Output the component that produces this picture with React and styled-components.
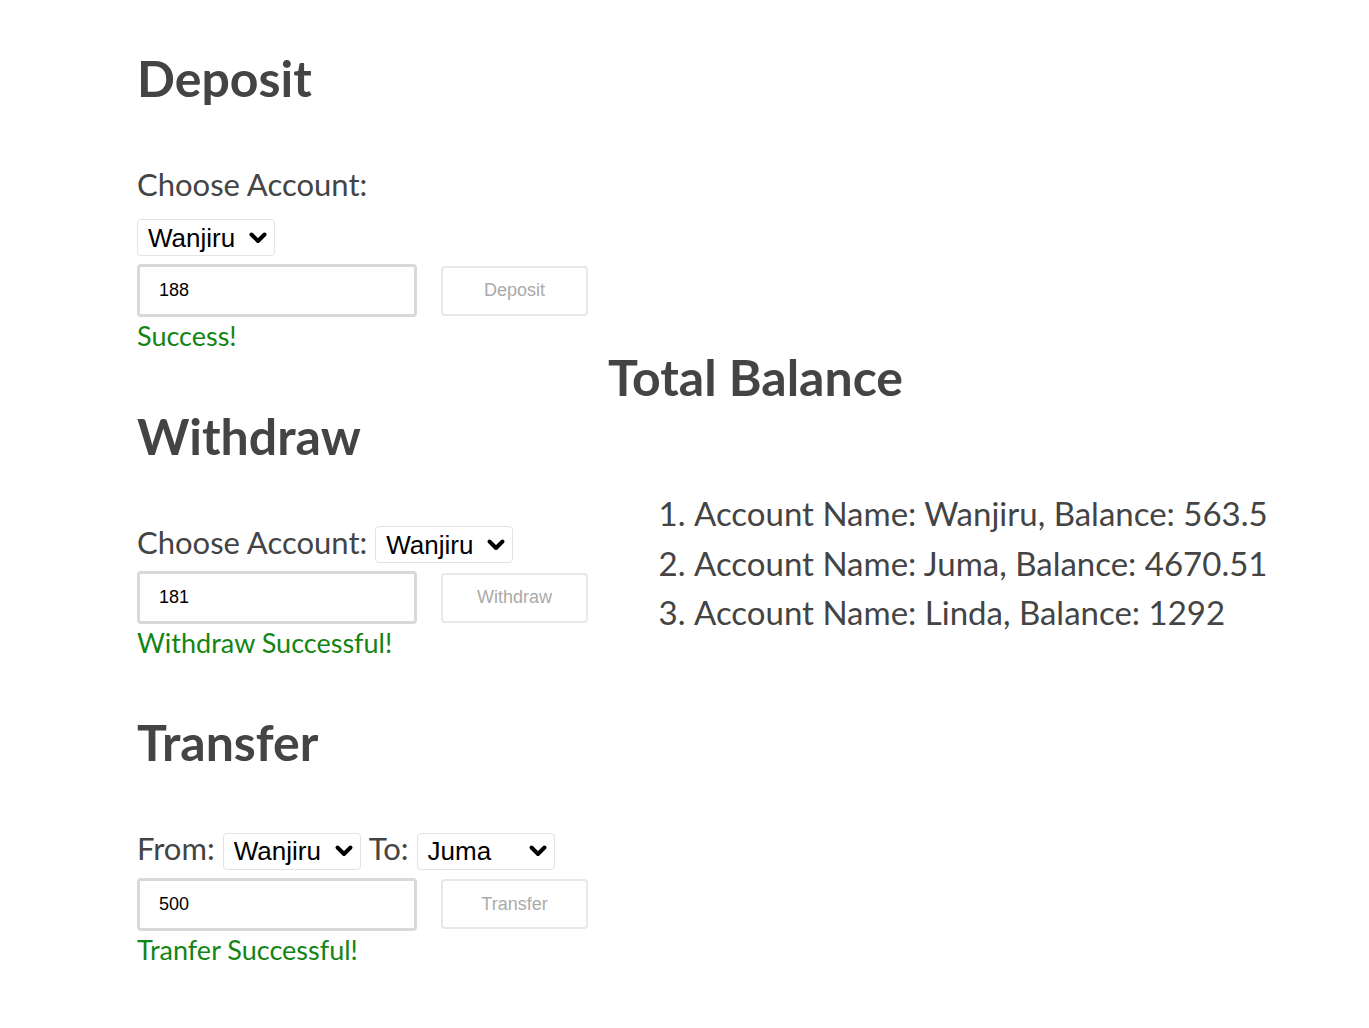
import React, { useState } from "react";
import styled, { createGlobalStyle } from "styled-components";

const GlobalStyle = createGlobalStyle`
  body {
    margin: 0;
    background: #fff;
    font-family: Lato, "Open Sans", sans-serif;
  }
`;

const Page = styled.div`
  display: flex;
  align-items: flex-start;
  gap: 20px;
  padding: 48px 0 40px 137px;
`;

const Column = styled.div`
  width: 451px;
  display: flex;
  flex-direction: column;
  align-items: flex-start;
`;

const Section = styled.section`
  display: flex;
  flex-direction: column;
  align-items: flex-start;
  margin-bottom: 53px;

  &:last-child {
    margin-bottom: 0;
  }
`;

const Heading = styled.h2`
  margin: 0 0 ${(p) => (p.$flush ? 0 : 58)}px;
  font-size: 50px;
  line-height: 1.2;
  font-weight: 700;
  color: #444;
`;

const Label = styled.span`
  font-size: 31px;
  line-height: 1.2;
  color: #444;
`;

const StackLabel = styled(Label)`
  display: block;
  margin-bottom: 16px;
`;

const SelectRow = styled.div`
  display: flex;
  align-items: baseline;
  gap: 8px;
`;

const SelectWrap = styled.span`
  position: relative;
  display: inline-flex;
`;

const Select = styled.select`
  appearance: none;
  -webkit-appearance: none;
  box-sizing: border-box;
  height: 37px;
  padding: 0 38px 0 10px;
  border: 1px solid #e2e2e2;
  border-radius: 4px;
  background: #fff;
  color: #000;
  font-family: "Liberation Sans", Arial, sans-serif;
  font-size: 26px;
  outline: none;
`;

const Chevron = styled.svg`
  position: absolute;
  right: 7px;
  top: 50%;
  transform: translateY(-50%);
  pointer-events: none;
`;

const FormRow = styled.div`
  display: flex;
  align-items: center;
  gap: 24px;
  margin-top: 8px;
`;

const AmountInput = styled.input`
  box-sizing: border-box;
  width: 280px;
  height: 53px;
  padding: 0 19px;
  border: 3px solid #d9d9d9;
  border-radius: 4px;
  font-family: "Liberation Sans", Arial, sans-serif;
  font-size: 18px;
  color: #000;
  outline: none;
`;

const ActionButton = styled.button`
  box-sizing: border-box;
  width: 147px;
  height: 50px;
  border: 2px solid #e8e8e8;
  border-radius: 4px;
  background: #fff;
  color: #aaa;
  font-family: "Liberation Sans", Arial, sans-serif;
  font-size: 18px;
`;

const Message = styled.p`
  margin: 3px 0 0;
  font-size: 27px;
  line-height: 1.2;
  color: #148514;
`;

const BalancePanel = styled.div`
  margin-top: 299px;
`;

const BalanceList = styled.ol`
  margin: 82px 0 0;
  padding-left: 86px;
  font-size: 33px;
  line-height: 1.5;
  color: #444;
`;

const accounts = [
  { name: "Wanjiru", balance: 563.5 },
  { name: "Juma", balance: 4670.51 },
  { name: "Linda", balance: 1292 },
];

function AccountSelect({ value, onChange }) {
  return (
    <SelectWrap>
      <Select value={value} onChange={(e) => onChange(e.target.value)}>
        {accounts.map((a) => (
          <option key={a.name} value={a.name}>
            {a.name}
          </option>
        ))}
      </Select>
      <Chevron width="20" height="13" viewBox="0 0 20 13">
        <polyline
          points="3.5,3 10,9.5 16.5,3"
          fill="none"
          stroke="#000"
          strokeWidth="4"
          strokeLinecap="round"
          strokeLinejoin="round"
        />
      </Chevron>
    </SelectWrap>
  );
}

function App() {
  const [depositFrom, setDepositFrom] = useState("Wanjiru");
  const [withdrawFrom, setWithdrawFrom] = useState("Wanjiru");
  const [from, setFrom] = useState("Wanjiru");
  const [to, setTo] = useState("Juma");
  const [deposit, setDeposit] = useState("188");
  const [withdraw, setWithdraw] = useState("181");
  const [transfer, setTransfer] = useState("500");

  return (
    <>
      <GlobalStyle />
      <Page>
        <Column>
          <Section>
            <Heading>Deposit</Heading>
            <StackLabel>Choose Account:</StackLabel>
            <AccountSelect value={depositFrom} onChange={setDepositFrom} />
            <FormRow>
              <AmountInput
                value={deposit}
                onChange={(e) => setDeposit(e.target.value)}
              />
              <ActionButton>Deposit</ActionButton>
            </FormRow>
            <Message>Success!</Message>
          </Section>

          <Section>
            <Heading>Withdraw</Heading>
            <SelectRow>
              <Label>Choose Account:</Label>
              <AccountSelect value={withdrawFrom} onChange={setWithdrawFrom} />
            </SelectRow>
            <FormRow>
              <AmountInput
                value={withdraw}
                onChange={(e) => setWithdraw(e.target.value)}
              />
              <ActionButton>Withdraw</ActionButton>
            </FormRow>
            <Message>Withdraw Successful!</Message>
          </Section>

          <Section>
            <Heading>Transfer</Heading>
            <SelectRow>
              <Label>From:</Label>
              <AccountSelect value={from} onChange={setFrom} />
              <Label>To:</Label>
              <AccountSelect value={to} onChange={setTo} />
            </SelectRow>
            <FormRow>
              <AmountInput
                value={transfer}
                onChange={(e) => setTransfer(e.target.value)}
              />
              <ActionButton>Transfer</ActionButton>
            </FormRow>
            <Message>Tranfer Successful!</Message>
          </Section>
        </Column>

        <BalancePanel>
          <Heading $flush>Total Balance</Heading>
          <BalanceList>
            {accounts.map((a) => (
              <li key={a.name}>
                Account Name: {a.name}, Balance: {a.balance}
              </li>
            ))}
          </BalanceList>
        </BalancePanel>
      </Page>
    </>
  );
}

export default App;
